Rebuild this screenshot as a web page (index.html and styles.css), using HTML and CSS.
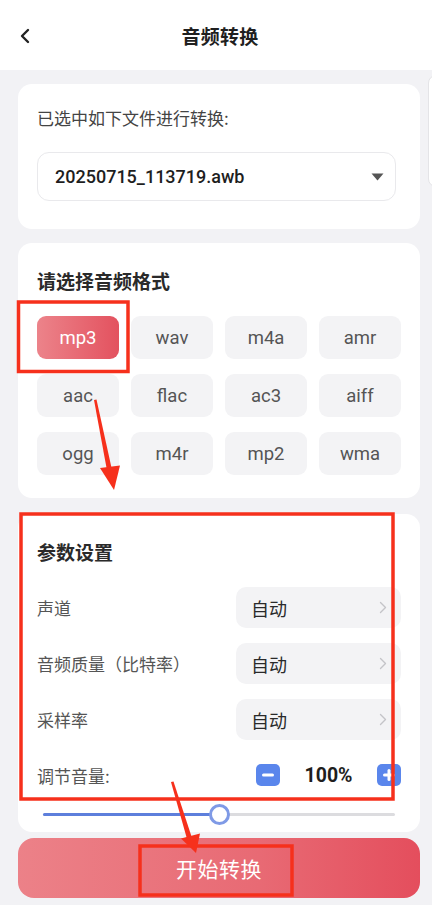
FILE: index.html
```html
<!DOCTYPE html>
<html lang="zh">
<head>
<meta charset="utf-8">
<title>音频转换</title>
<link rel="stylesheet" href="styles.css">
</head>
<body>
<div class="page">
  <header class="topbar">
    <span class="back">
      <svg width="12" height="16" viewBox="0 0 12 16"><path d="M9 2 L3 8 L9 14" fill="none" stroke="#222" stroke-width="2.4" stroke-linecap="round" stroke-linejoin="round"/></svg>
    </span>
    <h1 class="title">音频转换</h1>
    <span></span>
  </header>

  <main class="content">
    <section class="card file-card">
      <p class="file-label">已选中如下文件进行转换:</p>
      <div class="select">
        <span class="select-text">20250715_113719.awb</span>
        <svg class="caret" width="13" height="8" viewBox="0 0 13 8"><path d="M0.5 0.5 H12.5 L6.5 7.5 Z" fill="#555"/></svg>
      </div>
    </section>

    <section class="card format-card">
      <h2 class="card-title">请选择音频格式</h2>
      <div class="formats">
        <span class="fmt active">mp3</span>
        <span class="fmt">wav</span>
        <span class="fmt">m4a</span>
        <span class="fmt">amr</span>
        <span class="fmt">aac</span>
        <span class="fmt">flac</span>
        <span class="fmt">ac3</span>
        <span class="fmt">aiff</span>
        <span class="fmt">ogg</span>
        <span class="fmt">m4r</span>
        <span class="fmt">mp2</span>
        <span class="fmt">wma</span>
      </div>
    </section>

    <section class="card param-card">
      <h2 class="card-title">参数设置</h2>
      <div class="rows">
        <div class="row">
          <span class="row-label">声道</span>
          <span class="value">自动<svg class="chev" width="8" height="13" viewBox="0 0 8 13"><path d="M1.5 1.5 L6.5 6.5 L1.5 11.5" fill="none" stroke="#c4c4c8" stroke-width="1.4" stroke-linecap="round" stroke-linejoin="round"/></svg></span>
        </div>
        <div class="row">
          <span class="row-label">音频质量（比特率）</span>
          <span class="value">自动<svg class="chev" width="8" height="13" viewBox="0 0 8 13"><path d="M1.5 1.5 L6.5 6.5 L1.5 11.5" fill="none" stroke="#c4c4c8" stroke-width="1.4" stroke-linecap="round" stroke-linejoin="round"/></svg></span>
        </div>
        <div class="row">
          <span class="row-label">采样率</span>
          <span class="value">自动<svg class="chev" width="8" height="13" viewBox="0 0 8 13"><path d="M1.5 1.5 L6.5 6.5 L1.5 11.5" fill="none" stroke="#c4c4c8" stroke-width="1.4" stroke-linecap="round" stroke-linejoin="round"/></svg></span>
        </div>
      </div>
      <div class="volume">
        <span class="row-label">调节音量:</span>
        <div class="vol-ctrl">
          <span class="vol-btn"><svg width="24" height="22" viewBox="0 0 24 22"><rect x="6" y="9.5" width="12" height="3" rx="1.5" fill="#fff"/></svg></span>
          <span class="vol-val">100%</span>
          <span class="vol-btn"><svg width="24" height="22" viewBox="0 0 24 22"><rect x="6" y="9.5" width="12" height="3" rx="1.5" fill="#fff"/><rect x="10.5" y="5" width="3" height="12" rx="1.5" fill="#fff"/></svg></span>
        </div>
      </div>
      <div class="slider">
        <div class="track">
          <div class="fill" style="width:50%"></div>
          <span class="thumb" style="left:50%"></span>
        </div>
      </div>
    </section>

    <button class="start">开始转换</button>
  </main>

  <div class="peek"></div>

  <svg class="marks" width="432" height="905" viewBox="0 0 432 905">
    <g fill="none" stroke="#f6301c" stroke-width="3.5">
      <rect x="18.5" y="302" width="109.5" height="69.5"/>
      <rect x="21" y="514" width="372" height="285"/>
      <rect x="140" y="846" width="152" height="49"/>
    </g>
    <g fill="#f6301c">
      <polygon points="94,400 96.5,399.5 112,470 107,470.5"/>
      <polygon points="100,468 120,465.5 114,490"/>
      <polygon points="171,782 173.5,781.5 192,838 187,839"/>
      <polygon points="181,838.5 200,833.5 196,853"/>
    </g>
  </svg>
</div>
</body>
</html>
```

FILE: styles.css
```css
* { box-sizing: border-box; }

html, body {
  margin: 0;
  padding: 0;
}

body {
  background: #f2f2f5;
  font-family: Roboto, "Noto Sans CJK SC", "Noto Sans", sans-serif;
  color: #222;
}

.page {
  position: relative;
  width: 432px;
  min-height: 905px;
  overflow: hidden;
}

.topbar {
  height: 70px;
  background: #fff;
  display: grid;
  grid-template-columns: 1fr auto 1fr;
  align-items: center;
  padding: 0 11px 0 19px;
}

.back {
  display: flex;
  align-items: center;
  height: 20px;
  margin-top: 1px;
}

.title {
  margin: 0;
  font-size: 19px;
  font-weight: 700;
  color: #1f1f1f;
  letter-spacing: 0.2px;
  font-family: "Noto Sans CJK SC", sans-serif;
}

.content {
  padding: 14px 12px 0 18px;
}

.card {
  background: #fff;
  border-radius: 14px;
  width: 402px;
}

.file-card {
  padding: 23px 19px 28px;
}

.format-card {
  margin-top: 14px;
  padding: 26px 19px 23px;
}

.param-card {
  margin-top: 16px;
  padding: 26px 19px 8px;
}

.file-label {
  margin: 0;
  font-size: 17px;
  line-height: 22px;
  color: #444;
  font-family: "Noto Sans CJK SC", sans-serif;
}

.select {
  margin: 23px 5px 0 0;
  height: 49px;
  border: 1.5px solid #e9e9ec;
  border-radius: 12px;
  display: flex;
  align-items: center;
  justify-content: space-between;
  padding: 0 11px 0 17px;
}

.select-text {
  font-size: 18px;
  font-weight: 500;
  color: #1e1e1e;
}

.caret { display: block; }

.card-title {
  margin: 0;
  font-size: 19px;
  line-height: 24px;
  font-weight: 700;
  color: #2a2a2a;
  font-family: "Noto Sans CJK SC", sans-serif;
}

.formats {
  margin-top: 23px;
  display: grid;
  grid-template-columns: repeat(4, 82px);
  grid-auto-rows: 43px;
  column-gap: 12px;
  row-gap: 15px;
}

.fmt {
  display: flex;
  align-items: center;
  justify-content: center;
  background: #f3f3f5;
  border-radius: 9px;
  font-size: 18.5px;
  color: #555;
}

.fmt.active {
  background: linear-gradient(90deg, #ec838a 0%, #e3525f 100%);
  color: #fff;
}

.rows {
  margin-top: 23px;
  display: flex;
  flex-direction: column;
  gap: 15px;
}

.row {
  display: flex;
  align-items: center;
  justify-content: space-between;
  height: 41px;
}

.row-label {
  font-size: 17px;
  color: #555;
  font-family: "Noto Sans CJK SC", sans-serif;
}

.value {
  width: 165px;
  height: 41px;
  background: #f3f3f5;
  border-radius: 10px;
  display: flex;
  align-items: center;
  justify-content: space-between;
  padding: 0 14px 0 15px;
  font-size: 18px;
  color: #2a2a2a;
  font-family: "Noto Sans CJK SC", sans-serif;
}

.chev { display: block; }

.volume {
  margin-top: 20px;
  height: 30px;
  display: flex;
  align-items: center;
  justify-content: space-between;
}

.vol-ctrl {
  display: flex;
  align-items: center;
  gap: 23px;
}

.vol-btn {
  width: 24px;
  height: 22px;
  background: #5a86ec;
  border-radius: 5px;
  display: flex;
}

.vol-val {
  width: 51px;
  text-align: center;
  font-size: 19.5px;
  font-weight: 700;
  color: #1e1e1e;
}

.slider {
  margin-top: 14px;
  height: 20px;
  padding: 0 6px;
  display: flex;
  align-items: center;
}

.track {
  position: relative;
  width: 100%;
  height: 3px;
  border-radius: 2px;
  background: #dcdcdf;
}

.fill {
  height: 3px;
  border-radius: 2px;
  background: #5d7fdc;
}

.thumb {
  position: absolute;
  top: 50%;
  width: 21px;
  height: 21px;
  margin: -10.5px 0 0 -10.5px;
  border-radius: 50%;
  background: #fff;
  border: 3px solid #7f9ae6;
}

.start {
  display: block;
  margin-top: 6px;
  width: 402px;
  height: 60px;
  border: none;
  border-radius: 16px;
  background: linear-gradient(90deg, #ec8188 0%, #e86a74 60%, #e44e5d 100%);
  color: #fff;
  font-size: 21px;
  font-family: "Noto Sans CJK SC", sans-serif;
  letter-spacing: 0.5px;
}

.peek {
  position: absolute;
  left: 428px;
  top: 75px;
  width: 20px;
  height: 112px;
  background: #fff;
  border: 1px solid #e4e4e7;
  border-radius: 8px;
}

.marks {
  position: absolute;
  left: 0;
  top: 0;
  pointer-events: none;
}
```
